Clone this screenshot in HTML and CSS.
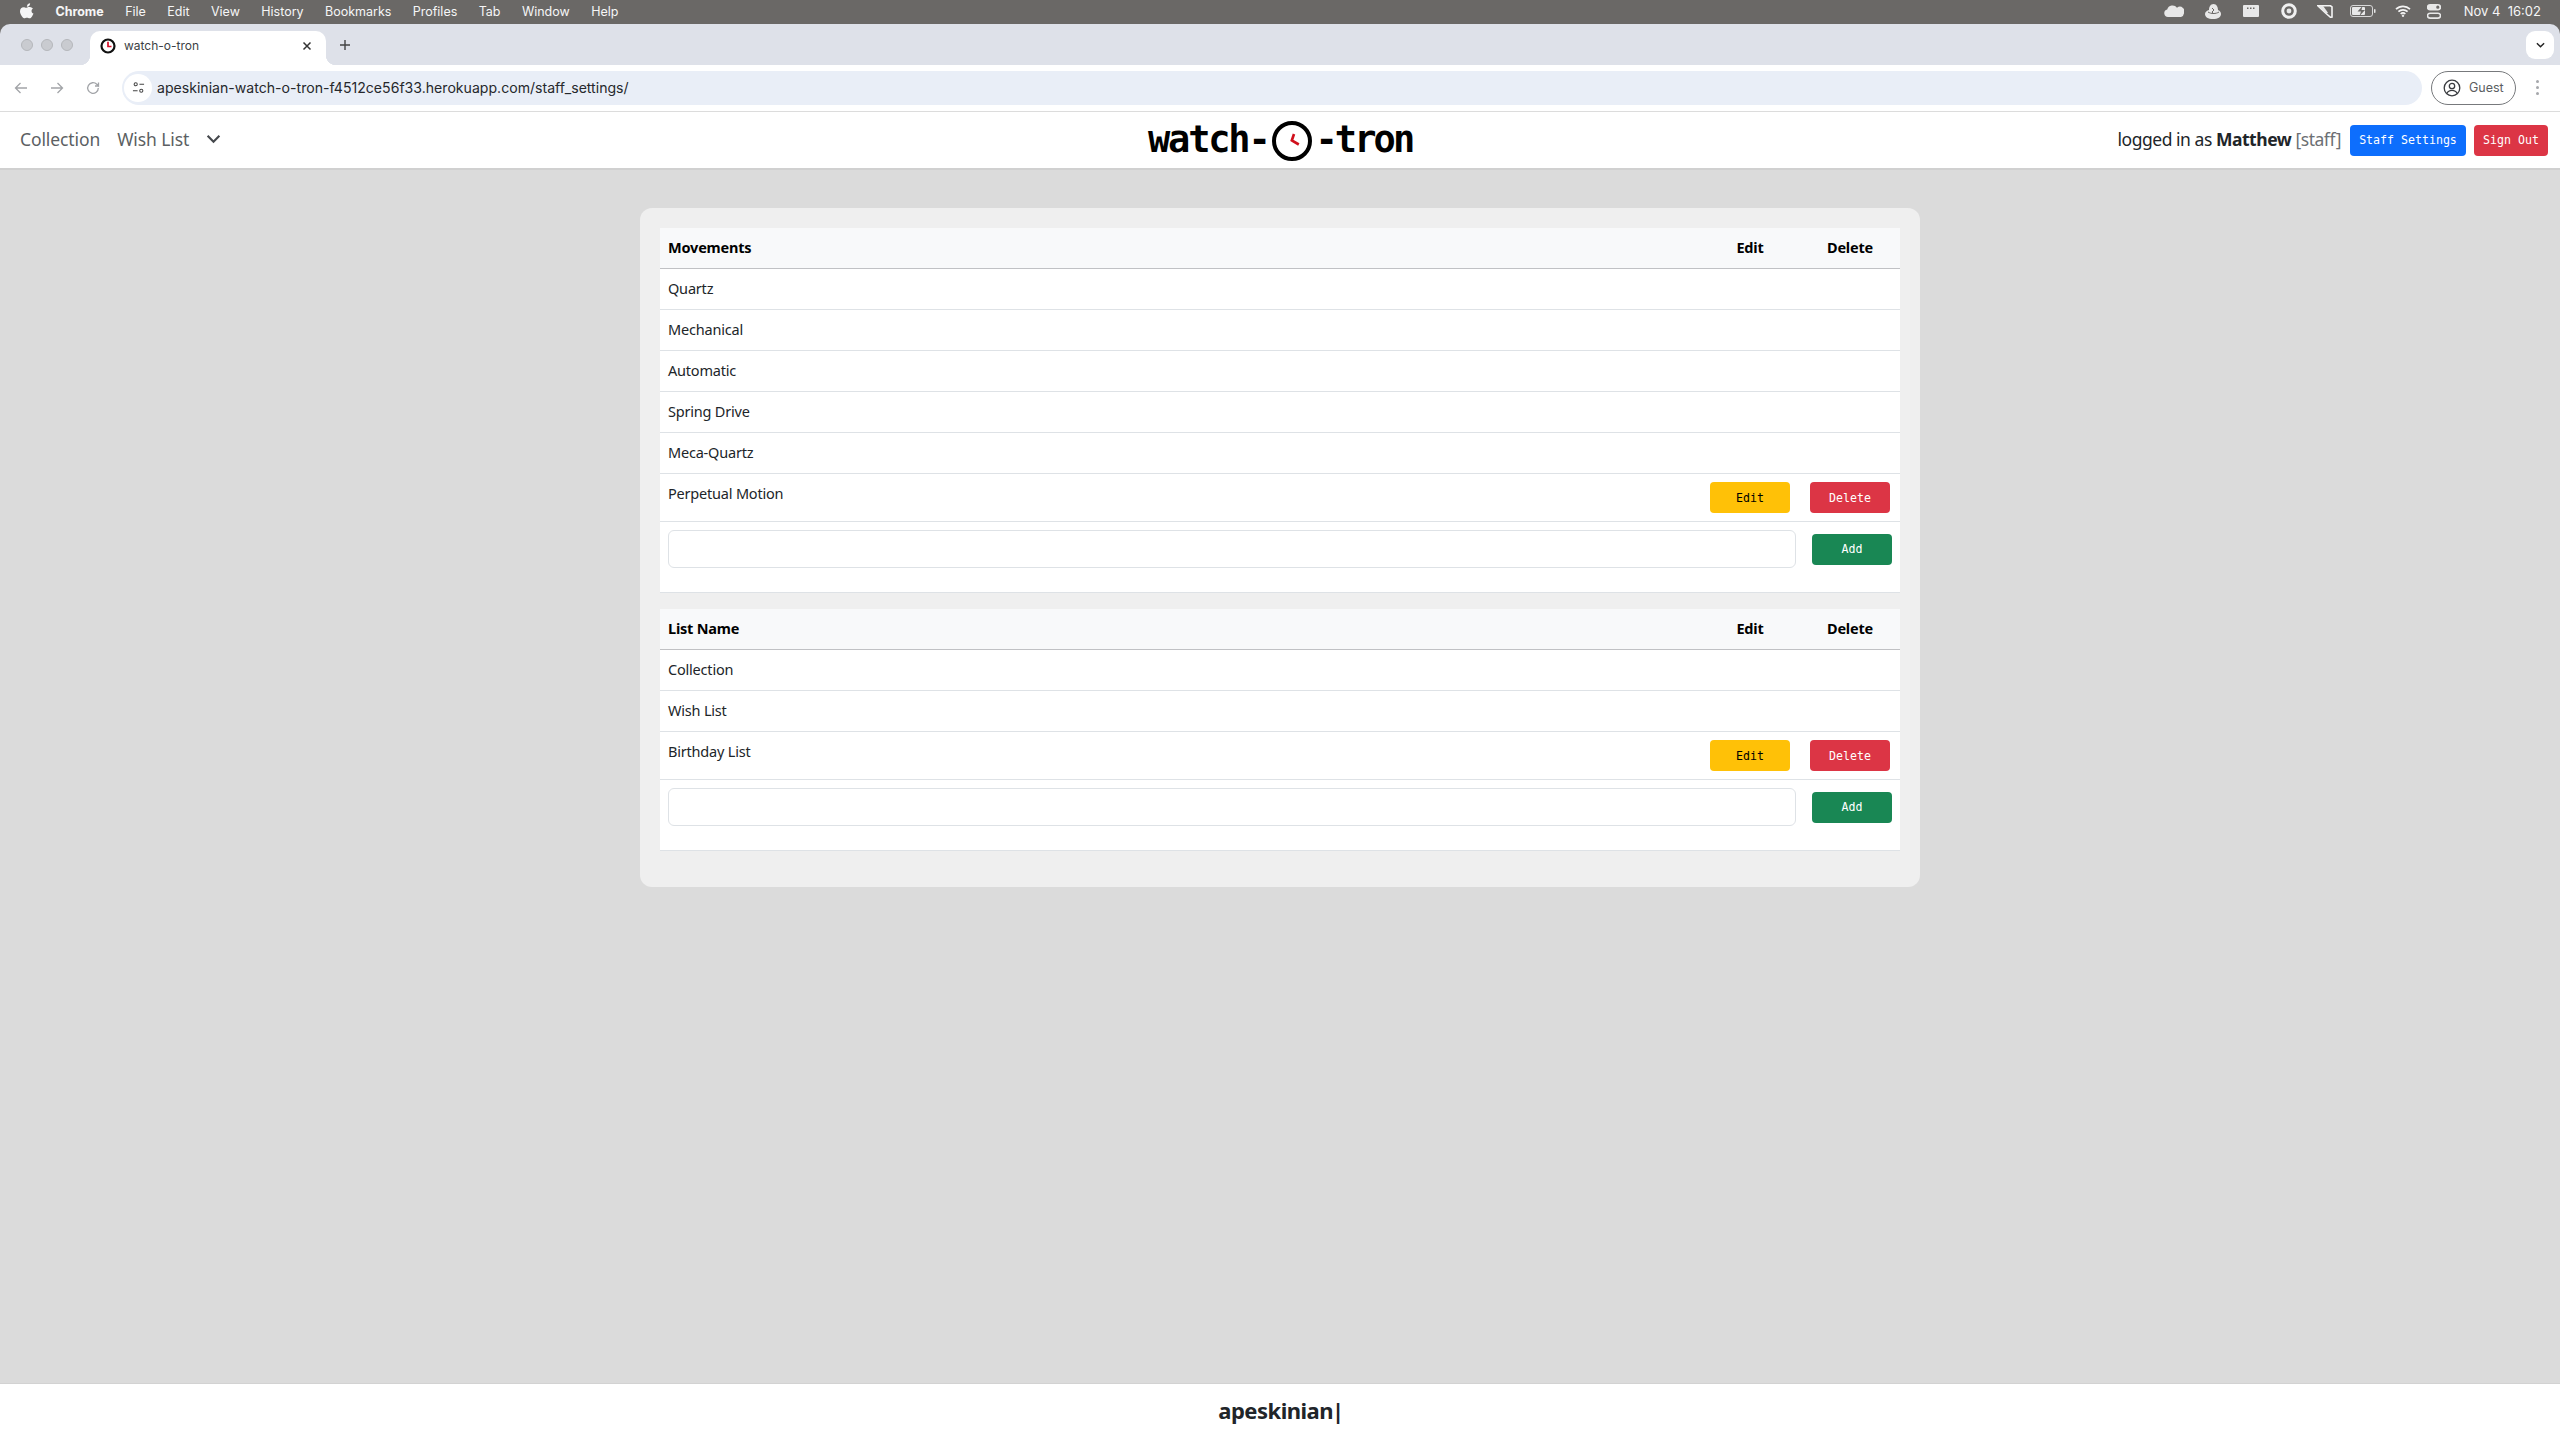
FILE: index.html
```html
<!DOCTYPE html>
<html>

<head>
    <meta charset="utf-8">
    <title>watch-o-tron</title>
    <link rel="stylesheet" href="styles.css">
</head>

<body>
    <!-- mac menu bar -->
    <div class="menubar">
        <svg class="apple" viewBox="0 0 16 18"><path d="M11.6 0c.1 1.100-.3 2.100-1 2.900-.7.800-1.700 1.300-2.700 1.200-.1-1 .4-2.100 1-2.800C9.600.5 10.700 0 11.600 0zM14.800 6.100c-.9.600-1.600 1.500-1.600 2.800 0 1.500.9 2.500 2.200 3-.4 1.100-.8 2-1.500 3-.8 1.200-1.700 2.500-3 2.500-1.200 0-1.600-.7-3-.7s-1.900.7-3 .7c-1.300 0-2.200-1.300-3-2.600C.4 12.500 0 10.500 0 9.300 0 6.300 2 4.600 4 4.600c1.200 0 2.200.8 3 .8.700 0 1.900-.9 3.300-.9 1.100 0 3 .4 4.500 1.600z"/></svg>
        <span class="menu-app">Chrome</span>
        <span>File</span>
        <span>Edit</span>
        <span>View</span>
        <span>History</span>
        <span>Bookmarks</span>
        <span>Profiles</span>
        <span>Tab</span>
        <span>Window</span>
        <span>Help</span>
        <div class="status">
            <svg class="st-cloud" viewBox="0 0 20 12"><path d="M4 12a3.800 3.800 0 0 1-.8-7.500A5.500 5.500 0 0 1 13 2.800a4.600 4.600 0 0 1 6.800 6A3.500 3.500 0 0 1 17 12z"/></svg>
            <svg class="st-hat" viewBox="0 0 16 15"><path d="M4 6c0-3 1.500-6 4.500-6S13 3 13 6c2 1 3 2 3 4 0 3-3 5-8 5s-8-2-8-5c0-2 2-3.500 4-4z"/><path class="st-cut" d="M3 8c3 2 8 2 11 0M7 4l2 2-2 2 2 2"/></svg>
            <svg class="st-win" viewBox="0 0 16 12"><path fill-rule="evenodd" d="M1 0h14a1 1 0 0 1 1 1v10a1 1 0 0 1-1 1H1a1 1 0 0 1-1-1V1a1 1 0 0 1 1-1zm3 2.500h1.500V4H4zm3 0h1.500V4H7zm3 0h1.500V4H10z"/></svg>
            <svg class="st-ring" viewBox="0 0 16 16"><circle cx="8" cy="8" r="6.300" fill="none" stroke="#f0f0f0" stroke-width="3"/><circle cx="8" cy="8" r="2.400"/></svg>
            <svg class="st-tag" viewBox="0 0 16 14"><path fill="none" stroke="#f4f4f4" stroke-width="1.600" d="M1 1.800h12.500L15 3v10l-1.500.3L8.500 9z"/><path d="M1 1.800h5l5 7-2 1z"/></svg>
            <svg class="st-batt" viewBox="0 0 26 12"><rect x=".5" y=".5" width="22" height="11" rx="2.500" fill="none" stroke="#d8d8d8"/><rect x="2" y="2" width="13" height="8" rx="1"/><path class="st-bolt" d="M12.500 1 7.500 6.500h3.500L9.500 11l5.500-6h-3.500z"/><rect x="24" y="4" width="1.500" height="4" rx=".7"/></svg>
            <svg class="st-wifi" viewBox="0 0 16 12"><path fill="none" stroke="#f4f4f4" stroke-width="1.700" d="M1 4.200a10 10 0 0 1 14 0M3.400 6.700a6.600 6.600 0 0 1 9.200 0M5.700 9a3.300 3.300 0 0 1 4.600 0"/><circle cx="8" cy="10.800" r="1.200"/></svg>
            <svg class="st-toggle" viewBox="0 0 14 15"><path fill-rule="evenodd" d="M3 0h8a3 3 0 0 1 0 6.500H3A3 3 0 0 1 3 0zm7.800 1.600a1.600 1.600 0 1 0 0 3.200 1.600 1.600 0 0 0 0-3.200z"/><path fill-rule="evenodd" d="M3 8.500h8a3 3 0 0 1 0 6.500H3a3 3 0 0 1 0-6.500zm0 1.400a1.700 1.700 0 1 0 0 3.400h8a1.700 1.700 0 0 0 0-3.400z"/></svg>
            <span class="clock">Nov 4&nbsp;&nbsp;16:02</span>
        </div>
    </div>

    <!-- browser tabs -->
    <div class="tabstrip">
        <div class="lights">
            <i></i><i></i><i></i>
        </div>
        <div class="tab">
            <svg class="favicon" viewBox="0 0 16 16"><circle cx="8" cy="8" r="6.500" fill="none" stroke="#111" stroke-width="2.200"/><path fill="none" stroke="#d8102a" stroke-width="1.700" d="M8 3.800V8.500h3.500"/></svg>
            <span class="tab-title">watch-o-tron</span>
            <svg class="tab-close" viewBox="0 0 10 10"><path d="M1.500 1.500l7 7M8.500 1.500l-7 7"/></svg>
        </div>
        <svg class="tab-new" viewBox="0 0 12 12"><path d="M6 1v10M1 6h10"/></svg>
        <div class="tab-menu">
            <svg viewBox="0 0 10 6"><path d="M1 1l4 4 4-4"/></svg>
        </div>
    </div>

    <!-- address bar -->
    <div class="toolbar">
        <svg class="tb-icon" viewBox="0 0 14 14"><path d="M13 7H1.500M6.500 2l-5 5 5 5"/></svg>
        <svg class="tb-icon" viewBox="0 0 14 14"><path d="M1 7h11.500M7.500 2l5 5-5 5"/></svg>
        <svg class="tb-icon" viewBox="0 0 14 14"><path d="M12.300 7a5.300 5.300 0 1 1-1.500-3.700L12.500 5V1.500M12.500 5H9"/></svg>
        <div class="omnibox">
            <div class="site-info">
                <svg viewBox="0 0 14 14"><circle cx="4" cy="3.500" r="1.700"/><path d="M8 3.500h5M1 10.500h5"/><circle cx="10" cy="10.500" r="1.700"/></svg>
            </div>
            <span class="url">apeskinian-watch-o-tron-f4512ce56f33.herokuapp.com/staff_settings/</span>
        </div>
        <div class="guest">
            <svg viewBox="0 0 18 18"><circle cx="9" cy="9" r="7.800"/><circle cx="9" cy="7" r="2.700"/><path d="M3.800 14.500c1-2.300 3-3.200 5.200-3.200s4.200.9 5.200 3.200"/></svg>
            <span>Guest</span>
        </div>
        <div class="kebab"><i></i><i></i><i></i></div>
    </div>

    <!-- site nav -->
    <nav class="nav">
        <div class="nav-links">
            <a>Collection</a>
            <a>Wish List</a>
            <svg class="nav-caret" viewBox="0 0 14 9"><path d="M1.500 1.500 7 7l5.500-5.500"/></svg>
        </div>
        <div class="logo">
            <span class="logo-left">watch-</span>
            <svg class="logo-clock" viewBox="0 0 40 40"><circle cx="20" cy="20" r="18" fill="none" stroke="#000" stroke-width="4"/><path fill="none" stroke="#d0101c" stroke-width="2.600" d="M22 13l-2.200 6.500 7 4"/></svg>
            <span>-tron</span>
        </div>
        <div class="nav-user">
            <span class="logged">logged in as <b>Matthew</b> <span class="role">[staff]</span></span>
            <button class="btn btn-blue btn-staff">Staff Settings</button>
            <button class="btn btn-red btn-out">Sign Out</button>
        </div>
    </nav>

    <main class="main">
        <div class="card">
            <table class="settings">
                <thead>
                    <tr>
                        <th>Movements</th>
                        <th class="col-act">Edit</th>
                        <th class="col-act">Delete</th>
                    </tr>
                </thead>
                <tbody>
                    <tr><td>Quartz</td><td></td><td></td></tr>
                    <tr><td>Mechanical</td><td></td><td></td></tr>
                    <tr><td>Automatic</td><td></td><td></td></tr>
                    <tr><td>Spring Drive</td><td></td><td></td></tr>
                    <tr><td>Meca-Quartz</td><td></td><td></td></tr>
                    <tr>
                        <td>Perpetual Motion</td>
                        <td class="col-act"><button class="btn btn-yellow">Edit</button></td>
                        <td class="col-act"><button class="btn btn-red">Delete</button></td>
                    </tr>
                    <tr>
                        <td colspan="3" class="add-cell">
                            <div class="add-row">
                                <input class="add-input" type="text">
                                <button class="btn btn-green">Add</button>
                            </div>
                        </td>
                    </tr>
                </tbody>
            </table>

            <table class="settings">
                <thead>
                    <tr>
                        <th>List Name</th>
                        <th class="col-act">Edit</th>
                        <th class="col-act">Delete</th>
                    </tr>
                </thead>
                <tbody>
                    <tr><td>Collection</td><td></td><td></td></tr>
                    <tr><td>Wish List</td><td></td><td></td></tr>
                    <tr>
                        <td>Birthday List</td>
                        <td class="col-act"><button class="btn btn-yellow">Edit</button></td>
                        <td class="col-act"><button class="btn btn-red">Delete</button></td>
                    </tr>
                    <tr>
                        <td colspan="3" class="add-cell">
                            <div class="add-row">
                                <input class="add-input" type="text">
                                <button class="btn btn-green">Add</button>
                            </div>
                        </td>
                    </tr>
                </tbody>
            </table>
        </div>
    </main>

    <footer class="footer">apeskinian<span class="cursor">|</span></footer>
</body>

</html>
```

FILE: styles.css
```css
* {
    box-sizing: border-box;
}

body {
    margin: 0;
    height: 1440px;
    display: flex;
    flex-direction: column;
    overflow: hidden;
    background-color: #6a6866;
    font-family: "Noto Sans", sans-serif;
    color: #212529;
}

/* menu bar */
.menubar {
    height: 24px;
    flex: none;
    display: flex;
    align-items: center;
    gap: 21.400px;
    padding: 0 0 2px 20px;
    background-color: #6a6866;
    color: #f6f6f6;
    font-family: Inter, sans-serif;
    font-size: 12.500px;
}

.apple {
    width: 14px;
    height: 16px;
    fill: #f6f6f6;
}

.menu-app {
    font-weight: 700;
}

.status {
    margin-left: auto;
    display: flex;
    align-items: center;
    padding-right: 19px;
    fill: #e8e8e8;
}

.status svg {
    flex: none;
}

.st-cloud { width: 20px; height: 12px; margin-right: 21px; }
.st-hat { width: 16px; height: 15px; margin-right: 22px; }
.st-win { width: 16px; height: 12px; margin-right: 22px; }
.st-ring { width: 16px; height: 16px; margin-right: 20px; }
.st-tag { width: 16px; height: 14px; margin-right: 17px; }
.st-batt { width: 26px; height: 12px; margin-right: 19px; }
.st-wifi { width: 16px; height: 12px; margin-right: 16px; }
.st-toggle { width: 14px; height: 15px; margin-right: 23px; }

.st-cut {
    fill: none;
    stroke: #6a6866;
    stroke-width: 1;
}

.st-bolt {
    fill: #6a6866;
}

.clock {
    font-size: 13px;
}

/* tabs */
.tabstrip {
    height: 41px;
    flex: none;
    display: flex;
    align-items: flex-end;
    position: relative;
    background-color: #dee1e9;
    border-radius: 10px 10px 0 0;
}

.lights {
    display: flex;
    gap: 8px;
    align-self: center;
    margin: 0 17px 0 21px;
}

.lights i {
    width: 12px;
    height: 12px;
    border-radius: 50%;
    background-color: #c9cbd0;
    border: 1px solid #b5b7bb;
}

.tab {
    width: 236px;
    height: 34px;
    display: flex;
    align-items: center;
    padding: 0 12px 5px 10px;
    position: relative;
    background-color: #fff;
    border-radius: 10px 10px 0 0;
}

/* flared bottom corners of the active tab */
.tab::before,
.tab::after {
    content: "";
    position: absolute;
    bottom: 0;
    width: 10px;
    height: 10px;
}

.tab::before {
    left: -10px;
    background: radial-gradient(circle at 0 0, #dee1e9 10px, #fff 10.500px);
}

.tab::after {
    right: -10px;
    background: radial-gradient(circle at 100% 0, #dee1e9 10px, #fff 10.500px);
}

.favicon {
    width: 16px;
    height: 16px;
}

.tab-title {
    margin-left: 8px;
    font-family: Inter, sans-serif;
    font-size: 12px;
    color: #3c3f44;
}

.tab-close {
    width: 10px;
    height: 10px;
    margin-left: auto;
    margin-right: 2px;
    fill: none;
    stroke: #333;
    stroke-width: 1.500;
}

.tab-new {
    width: 12px;
    height: 12px;
    margin: 0 0 14px 13px;
    fill: none;
    stroke: #444;
    stroke-width: 1.400;
}

.tab-menu {
    position: absolute;
    right: 6px;
    top: 7px;
    width: 28px;
    height: 28px;
    display: flex;
    align-items: center;
    justify-content: center;
    background-color: #fff;
    border-radius: 9px;
}

.tab-menu svg {
    width: 9px;
    height: 6px;
    fill: none;
    stroke: #222;
    stroke-width: 1.600;
}

/* address bar */
.toolbar {
    height: 47px;
    flex: none;
    display: flex;
    align-items: center;
    padding: 0 16px 1px 14px;
    background-color: #fff;
    border-bottom: 1px solid #dcdcdc;
}

.tb-icon {
    width: 14px;
    height: 14px;
    flex: none;
    margin-right: 22px;
    fill: none;
    stroke: #a2a4a8;
    stroke-width: 1.300;
}

.omnibox {
    width: 2300px;
    height: 34px;
    flex: none;
    display: flex;
    align-items: center;
    padding-left: 2px;
    background-color: #e9eef7;
    border-radius: 17px;
}

.site-info {
    width: 28px;
    height: 28px;
    display: flex;
    align-items: center;
    justify-content: center;
    background-color: #fff;
    border-radius: 50%;
}

.site-info svg {
    width: 13px;
    height: 13px;
    fill: none;
    stroke: #444;
    stroke-width: 1.100;
}

.url {
    margin-left: 5px;
    font-family: Inter, sans-serif;
    font-size: 14.100px;
    color: #26282c;
}

.guest {
    width: 85px;
    height: 34px;
    flex: none;
    margin-left: 9px;
    display: flex;
    align-items: center;
    gap: 8px;
    padding-left: 11px;
    border: 1px solid #77797c;
    border-radius: 17px;
    font-family: Inter, sans-serif;
    font-size: 12.500px;
    color: #5c5e62;
}

.guest svg {
    width: 18px;
    height: 18px;
    fill: none;
    stroke: #3a3c40;
    stroke-width: 1.300;
}

.kebab {
    margin-left: 20px;
    display: flex;
    flex-direction: column;
    gap: 3px;
}

.kebab i {
    width: 3px;
    height: 3px;
    border-radius: 50%;
    background-color: #a5a7ab;
}

/* site nav */
.nav {
    height: 58px;
    flex: none;
    display: flex;
    align-items: center;
    justify-content: space-between;
    position: relative;
    padding: 0 12px 0 20px;
    background-color: #fff;
    border-bottom: 2px solid #d0d0d0;
}

.nav-links {
    display: flex;
    align-items: center;
    gap: 17px;
    padding-bottom: 2px;
    font-size: 17.500px;
    letter-spacing: -0.100px;
    color: #5c5f63;
}

.nav-caret {
    width: 15px;
    height: 10px;
    margin-left: 0;
    fill: none;
    stroke: #45484c;
    stroke-width: 2;
}

.logo {
    position: absolute;
    left: 1148px;
    top: 5px;
    display: flex;
    align-items: center;
    font-family: "DejaVu Sans Mono", monospace;
    font-weight: 700;
    font-size: 37px;
    letter-spacing: -2.900px;
    color: #000;
}

.logo-left {
    letter-spacing: -2.200px;
}

.logo-clock {
    width: 40px;
    height: 40px;
    margin: 4px 3px 0 4px;
}

.nav-user {
    display: flex;
    align-items: center;
    font-size: 17.500px;
    letter-spacing: -0.460px;
}

.logged {
    margin-right: 9px;
    padding-bottom: 2px;
}

.role {
    color: #6c6f73;
}

.btn {
    height: 31px;
    padding: 0;
    border: none;
    border-radius: 4px;
    font-family: "DejaVu Sans Mono", monospace;
    font-size: 11.600px;
    letter-spacing: 0;
    color: #fff;
}

.btn-blue { background-color: #0d6efd; }
.btn-red { background-color: #dc3545; }
.btn-yellow { background-color: #ffc107; color: #000; }
.btn-green { background-color: #198754; }

.btn-staff {
    width: 116px;
    margin-right: 8px;
}

.btn-out {
    width: 74px;
}

.settings .btn {
    width: 80px;
}

/* content */
.main {
    flex: 1;
    padding-top: 38px;
    background-color: #dbdbdb;
}

.card {
    width: 1280px;
    margin: 0 auto;
    padding: 20px;
    background-color: #efefef;
    border-radius: 12px;
}

.settings {
    width: 100%;
    margin-bottom: 16px;
    table-layout: fixed;
    border-collapse: separate;
    border-spacing: 0;
    background-color: #fff;
    font-size: 14.500px;
    line-height: 24px;
}

.settings th,
.settings td {
    padding: 7px 8px 9px;
    text-align: left;
    vertical-align: top;
    border-bottom: 1px solid #dee2e6;
}

.settings th {
    height: 41px;
    background-color: #f8f9fa;
    border-bottom-color: #c0c1c4;
    color: #000;
    letter-spacing: -0.200px;
}

.settings td {
    height: 41px;
    letter-spacing: -0.200px;
}

.settings .col-act {
    width: 100px;
    text-align: center;
}

.settings td.col-act {
    padding: 8px;
}

.settings .add-cell {
    padding: 8px 8px 24px;
}

.add-row {
    display: flex;
    align-items: center;
    gap: 16px;
}

.add-input {
    flex: 1;
    height: 38px;
    background-color: #fff;
    border: 1px solid #dee2e6;
    border-radius: 6px;
}

/* footer */
.footer {
    height: 57px;
    flex: none;
    display: flex;
    align-items: center;
    justify-content: center;
    padding: 0 0 4px 2px;
    background-color: #fff;
    border-top: 1px solid #d2d2d2;
    font-size: 22px;
    font-weight: 700;
    letter-spacing: -0.500px;
}

.cursor {
    margin-left: -1px;
    font-weight: 700;
}
```
